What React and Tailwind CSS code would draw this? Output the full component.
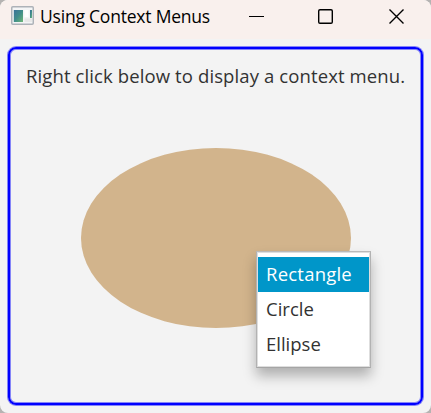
import React from "react";

function AppIcon() {
  return (
    <svg className="block shrink-0" width="23" height="19" viewBox="0 0 23 19">
      <defs>
        <linearGradient id="pane" x1="0" y1="0" x2="1" y2="1">
          <stop offset="0" stopColor="#3a7199" />
          <stop offset="0.5" stopColor="#408d8b" />
          <stop offset="1" stopColor="#6fb777" />
        </linearGradient>
      </defs>
      <rect x="0.75" y="0.75" width="21.5" height="17.5" rx="1" fill="#f4f5f6" stroke="#adb2b8" strokeWidth="1.5" />
      <rect x="2.8" y="4" width="9.2" height="12" fill="url(#pane)" />
      <rect x="13.5" y="4" width="4" height="7" fill="#fff" />
      <rect x="19" y="4" width="2" height="8" fill="url(#pane)" />
      <rect x="13.5" y="12.5" width="7.5" height="3.5" fill="#e8e8e8" />
    </svg>
  );
}

function TitleBar() {
  return (
    <header className="flex h-[39px] shrink-0 bg-[#f9f0ed] pl-[11px] pt-[6px]">
      <AppIcon />
      <h1 className="ml-[6px] -mt-[2px] h-[24px] w-[208px] whitespace-nowrap text-[17.5px] leading-[24px] tracking-[-0.21px] text-black">
        Using Context Menus
      </h1>
      <div className="flex pt-[2px]">
        <svg width="17" height="17" viewBox="0 0 17 17" className="block" stroke="#000" fill="none">
          <path d="M1 8.5H16" />
        </svg>
        <svg width="17" height="17" viewBox="0 0 17 17" className="ml-[52px] block" stroke="#000" fill="none">
          <rect x="1.7" y="1.7" width="13.6" height="13.6" rx="1.3" strokeWidth="1.4" />
        </svg>
        <svg width="17" height="17" viewBox="0 0 17 17" className="ml-[54px] block" stroke="#000" fill="none">
          <path d="M1.5 1.5L15.5 15.5M15.5 1.5L1.5 15.5" strokeWidth="1.4" />
        </svg>
      </div>
    </header>
  );
}

function ContextMenu() {
  return (
    <ul className="absolute left-[256px] top-[251px] h-[117px] w-[115px] border border-t-[#bababa] border-x-[#b2b2b2] border-b-[#a5a5a5] bg-white pt-[5px] text-[18.5px] leading-[33px] text-[#323232] shadow-[inset_0_0_0_1px_#dedede,0_8px_12px_0_rgba(0,0,0,0.28)]">
      <li className="mx-px h-[35px] bg-[#0096c9] pl-2 tracking-[0.22px] text-white">Rectangle</li>
      <li className="mx-px h-[35px] pl-2">Circle</li>
      <li className="mx-px h-[35px] pl-2">Ellipse</li>
    </ul>
  );
}

export default function App() {
  return (
    <div className="h-[413px] w-[431px] overflow-hidden bg-[#b5b3b2] font-['Open_Sans',sans-serif]">
      <div className="relative flex h-full flex-col overflow-hidden rounded-[8px] bg-[#f3f3f3]">
        <TitleBar />
        <main className="ml-[8px] mt-[8px] flex h-[358px] w-[415px] shrink-0 flex-col items-center rounded-[8px] border-2 border-[#0000ff] shadow-[0_0_0_1px_rgba(0,0,255,0.45),inset_0_0_0_1px_rgba(0,0,255,0.45)]">
          <p className="mt-[14px] h-[26px] self-start whitespace-nowrap pl-[16px] text-[18.5px] leading-[26px] tracking-[0.11px] text-[#323232]">
            Right click below to display a context menu.
          </p>
          <div className="mt-[59px] h-[180px] w-[270px] rounded-[50%] bg-[#d2b48c]" />
        </main>
        <ContextMenu />
      </div>
    </div>
  );
}
